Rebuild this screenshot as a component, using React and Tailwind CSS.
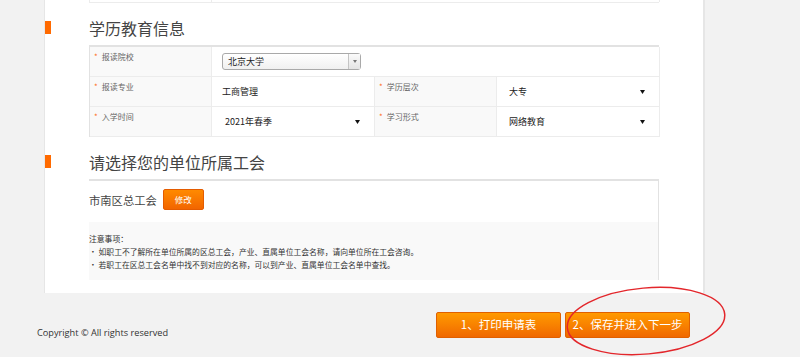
import React from "react";

const cjk = { fontFamily: '"Noto Sans CJK SC", "Noto Sans", sans-serif' };

function Label({ children }) {
  return (
    <div className="flex items-start gap-[4px] border-r border-b border-[#ececec] bg-[#f9f9f9] pl-[4px] pt-[5px] text-[8px] leading-[10px] text-[#666]">
      <span className="text-[#ff6a1a]">*</span>
      <span>{children}</span>
    </div>
  );
}

function Caret() {
  return (
    <svg width="5" height="4" viewBox="0 0 5 4">
      <path d="M0 0h5L2.5 4z" fill="#111" />
    </svg>
  );
}

function DropValue({ children, pl = "pl-[13px]", pr = "pr-[14px]" }) {
  return (
    <div className={`flex items-center justify-between border-r border-b border-[#ececec] ${pl} ${pr} text-[9px] text-[#222]`}>
      <span>{children}</span>
      <Caret />
    </div>
  );
}

function SectionTitle({ children, className = "" }) {
  return (
    <div className={`flex h-[13px] items-center ${className}`}>
      <div className="h-[13px] w-[6px] bg-[#ff6a00]" />
      <div className="ml-[38px] text-[16px] leading-[20px] text-[#444]">{children}</div>
    </div>
  );
}

export default function App() {
  return (
    <div className="relative h-[357px] w-[800px] overflow-hidden bg-[#f2f2f2]" style={cjk}>
      <div className="ml-[44px] w-[661px] border-l border-r-2 border-[#e6e6e6] bg-white pb-[13px]">
        <div className="ml-[44px] grid h-[3px] w-[570px] grid-cols-[122px_448px] border-l border-b border-[#ececec]">
          <div className="border-r border-[#ececec]" />
          <div className="border-r border-[#ececec]" />
        </div>

        <SectionTitle className="mt-[18px]">学历教育信息</SectionTitle>

        <div className="ml-[44px] mt-[11px] grid w-[570px] grid-cols-[122px_163px_122px_163px] grid-rows-[30px_30px_30px] border-t-2 border-l border-[#e2e2e2]">
          <Label>报读院校</Label>
          <div className="col-span-3 flex items-center border-r border-b border-[#ececec] pl-[10px]">
            <div className="flex h-[17px] w-[139px] items-stretch rounded-[3px] border border-[#a9a9a9] bg-gradient-to-b from-white to-[#f0f0f0] shadow-[inset_0_1px_0_#fff]">
              <span className="flex-1 pl-[5px] text-[9px] leading-[15px] text-[#222]">北京大学</span>
              <span className="flex w-[12px] items-center justify-center border-l border-[#c4c4c4] bg-gradient-to-b from-[#fafafa] to-[#e4e4e4]">
                <svg width="4" height="3" viewBox="0 0 4 3">
                  <path d="M0 0h4L2 3z" fill="#777" />
                </svg>
              </span>
            </div>
          </div>

          <Label>报读专业</Label>
          <div className="flex items-center border-r border-b border-[#ececec] pl-[10px] text-[9px] text-[#222]">工商管理</div>
          <Label>学历层次</Label>
          <DropValue pl="pl-[12px]">大专</DropValue>

          <Label>入学时间</Label>
          <DropValue pl="pl-[13px]">2021年春季</DropValue>
          <Label>学习形式</Label>
          <DropValue pl="pl-[12px]">网络教育</DropValue>
        </div>

        <SectionTitle className="mt-[18px]">请选择您的单位所属工会</SectionTitle>

        <div className="ml-[44px] mt-[11px] w-[570px] border-t-2 border-r border-[#e2e2e2]">
          <div className="flex items-center gap-[6px] pt-[8px]">
            <span className="text-[11.3px] leading-[14px] text-[#444]">市南区总工会</span>
            <button className="h-[21px] w-[41px] rounded-[2px] border border-[#e45c00] bg-gradient-to-b from-[#ff8a00] to-[#f26500] text-[8.5px] text-white">
              修改
            </button>
          </div>
          <div className="mt-[12px] h-[58px] bg-[#f9f9f9] pt-[10px] text-[7.8px] leading-[13px] text-[#333]">
            <div>注意事项：</div>
            <div>• 如职工不了解所在单位所属的区总工会，产业、直属单位工会名称，请向单位所在工会咨询。</div>
            <div>• 若职工在区总工会名单中找不到对应的名称，可以到产业、直属单位工会名单中查找。</div>
          </div>
        </div>
      </div>

      <div className="flex">
        <div
          className="pl-[37px] pt-[34px] text-[9.2px] leading-[12px] text-[#333]"
          style={{ fontFamily: '"Open Sans", sans-serif' }}
        >
          Copyright © All rights reserved
        </div>
        <div className="ml-auto mr-[110px] mt-[19px] flex gap-[4px]">
          <button className="h-[26px] w-[125px] rounded-[2px] border border-[#e06000] bg-gradient-to-b from-[#ff9a00] to-[#f06800] text-[11.5px] text-white">
            1、打印申请表
          </button>
          <button className="h-[26px] w-[125px] rounded-[2px] border border-[#e06000] bg-gradient-to-b from-[#ff9a00] to-[#f06800] text-[11.5px] text-white">
            2、保存并进入下一步
          </button>
        </div>
      </div>

      <svg className="pointer-events-none absolute left-[560px] top-[282px]" width="172" height="78" viewBox="0 0 172 78">
        <ellipse cx="86" cy="39" rx="79" ry="33" fill="none" stroke="#e3262b" strokeWidth="1.5" transform="rotate(-5 86 39)" />
      </svg>
    </div>
  );
}
